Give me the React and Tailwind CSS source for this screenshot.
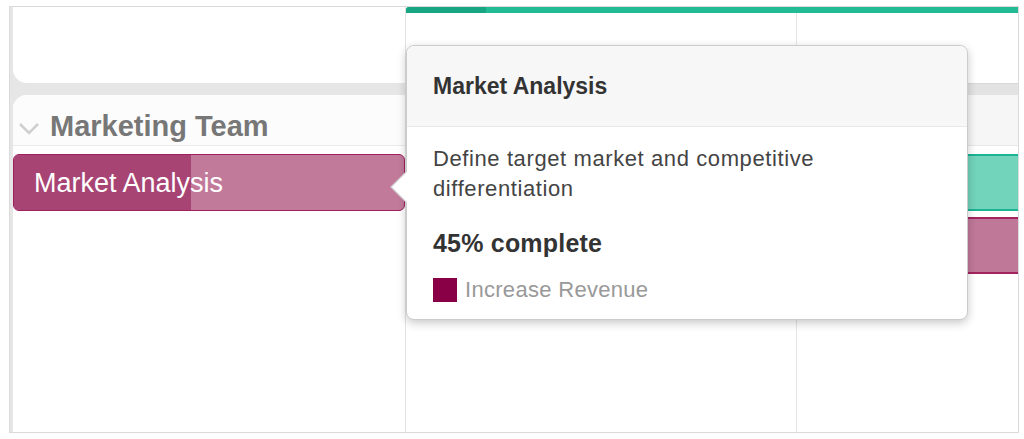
export default function App() {
  const font = "font-['Liberation_Sans',Arial,sans-serif]";
  return (
    <div className={`relative w-[1024px] h-[439px] bg-white pt-[6px] pl-[9px] pr-[5px] pb-[6px] ${font}`}>
      <div className="h-full flex border border-[#dadada] bg-[#e6e6e6]">
        {/* left column */}
        <div className="w-[395px] flex flex-col pl-[3px]">
          <div className="h-[76px] bg-white rounded-bl-[14px]" />
          <div className="h-[12px]" />
          <div className="flex-1 bg-white rounded-tl-[14px] flex flex-col">
            <div className="h-[51px] flex items-center pt-[12px] border-b border-[#ebebeb] bg-[#fcfcfc] rounded-tl-[14px]">
              <svg width="26" height="16" viewBox="0 0 26 16" className="ml-[4px] mt-[4px]">
                <polyline points="3,4 12,13 21,4" fill="none" stroke="#cfcfcf" strokeWidth="2.5" />
              </svg>
              <span className="ml-[7px] text-[29px] font-bold text-[#777] leading-none">Marketing Team</span>
            </div>
            <div className="pt-[8px]">
              <div className="h-[57px] rounded-[6px] border-[1.5px] border-[#a01f5d] bg-[#c27a9b] flex overflow-hidden relative">
                <div className="w-[177px] bg-[#a84474]" />
                <span className="absolute left-[20px] top-0 h-full flex items-center pt-[2px] text-[27px] text-white leading-none">Market Analysis</span>
              </div>
            </div>
          </div>
        </div>
        {/* right column */}
        <div className="flex-1 flex flex-col bg-white border-l border-[#e2e2e2]">
          <div className="h-[76px] flex flex-col">
            <div className="h-[6px] flex bg-[#22bb96] rounded-tl-[3px]">
              <div className="w-[80px] bg-[#17a583] rounded-tl-[3px]" />
            </div>
            <div className="flex-1 flex">
              <div className="w-[391px] border-r border-[#e6e6e6]" />
              <div className="flex-1" />
            </div>
          </div>
          <div className="h-[12px] bg-[#e3e3e3] border-t border-[#d8d8d8]" />
          <div className="h-[51px] bg-[#f6f6f6] border-b border-[#e8e8e8]" />
          <div className="flex-1 flex">
            <div className="w-[391px] border-r border-[#e6e6e6]" />
            <div className="flex-1 flex flex-col pt-[8px] gap-[6px]">
              <div className="ml-[80px] h-[57px] bg-[#72d4bb] border-y-2 border-[#1ab394]" />
              <div className="ml-[80px] h-[57px] bg-[#c07898] border-y-2 border-[#a3245f]" />
            </div>
          </div>
        </div>
      </div>

      {/* tooltip */}
      <div className="absolute left-[406px] top-[45px] w-[562px] h-[275px] bg-white rounded-[8px] border border-[#cccccc] shadow-[0_3px_10px_rgba(0,0,0,0.22)]">
        <div className="absolute left-[-12px] top-[130px] w-[22px] h-[22px] bg-white border-l border-b border-[#cccccc] rotate-45" />
        <div className="relative h-[81px] bg-[#f7f7f7] border-b border-[#e8e8e8] rounded-t-[8px] flex items-center pl-[26px]">
          <span className="text-[23px] font-bold text-[#333] leading-none">Market Analysis</span>
        </div>
        <div className="relative pl-[26px] pt-[17px]">
          <p className="text-[22px] leading-[30px] text-[#444] tracking-[0.6px] w-[420px]">Define target market and competitive differentiation</p>
          <p className="mt-[24px] text-[25px] leading-[30px] font-bold text-[#333] tracking-[0.2px]">45% complete</p>
          <div className="mt-[20px] flex items-center">
            <div className="w-[24px] h-[24px] bg-[#8a0047]" />
            <span className="ml-[8px] text-[22px] text-[#999] leading-none tracking-[0.3px]">Increase Revenue</span>
          </div>
        </div>
      </div>
    </div>
  );
}
